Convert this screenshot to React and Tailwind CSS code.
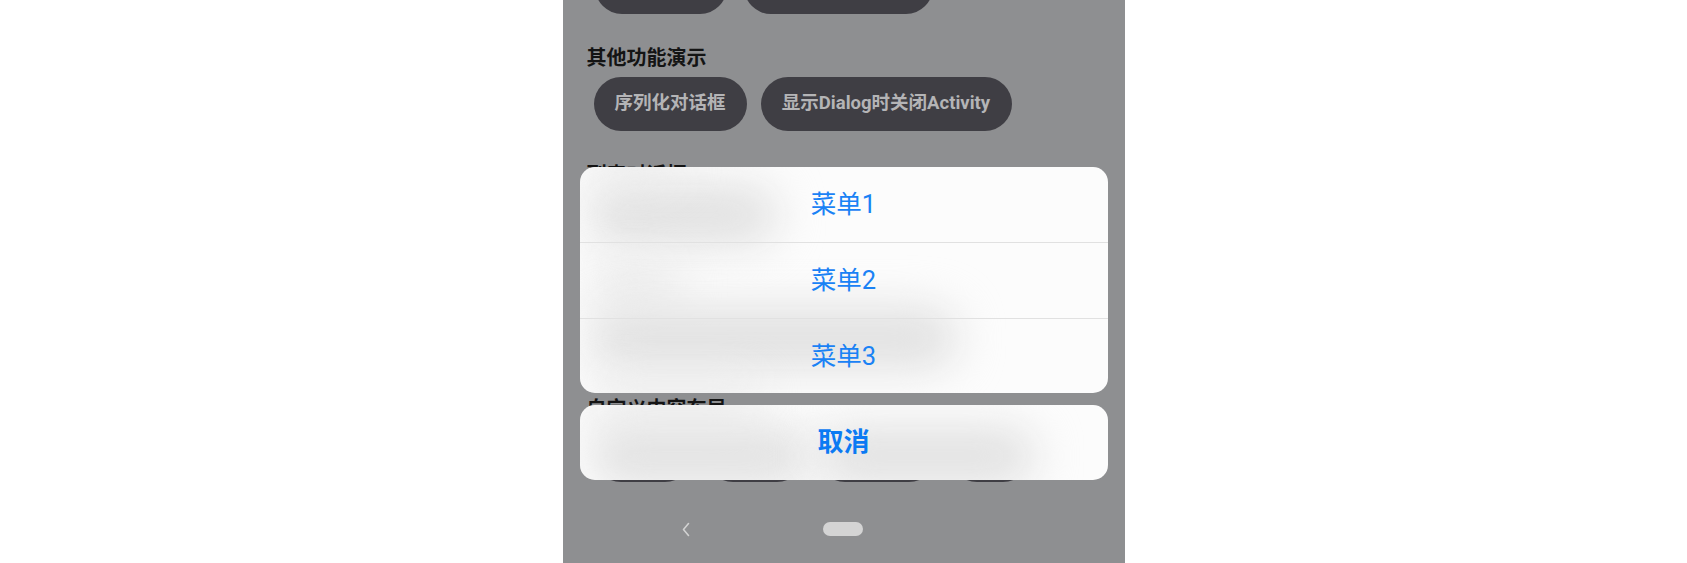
import React from "react";

const FONT = { fontFamily: "Roboto, 'Noto Sans CJK SC', 'Noto Sans', sans-serif" };

function Pill({ children, className = "" }) {
  return (
    <div
      className={`h-[54px] shrink-0 rounded-full bg-[#3f3e44] flex items-center justify-center text-[18.5px] font-bold text-[#b4b4b6] whitespace-nowrap ${className}`}
    >
      {children}
    </div>
  );
}

function Heading({ children, className = "" }) {
  return (
    <div className={`h-[26px] leading-[26px] text-[20px] font-semibold text-[#141414] whitespace-nowrap ${className}`}>
      {children}
    </div>
  );
}

/* soft blurred shapes: what shows through the frosted-glass sheet */
function Smudge({ l, t, w, h, c = "#e1e1e1" }) {
  return (
    <div
      className="absolute rounded-full blur-[22px]"
      style={{ left: l, top: t, width: w, height: h, backgroundColor: c }}
    />
  );
}

const card = "relative rounded-[15px] overflow-hidden bg-[#fcfcfc]";

export default function App() {
  return (
    <div className="w-full h-[563px] bg-white flex justify-center" style={FONT}>
      <div className="relative w-[562px] h-[563px] bg-[#8e8f91] overflow-hidden">
        {/* page content */}
        <div className="flex flex-col pl-[24px]">
          <div className="flex gap-[17px] mt-[-40px] ml-[8px]">
            <Pill className="w-[132px]">文本输入</Pill>
            <Pill className="w-[189px]">自定义对话框</Pill>
          </div>

          <Heading className="mt-[31px]">其他功能演示</Heading>
          <div className="flex gap-[14px] mt-[6px] ml-[7px]">
            <Pill className="w-[153px]">序列化对话框</Pill>
            <Pill className="w-[251px]">显示Dialog时关闭Activity</Pill>
          </div>

          <Heading className="mt-[31px]">列表对话框</Heading>
          <div className="flex gap-[14px] mt-[6px] ml-[7px]">
            <Pill className="w-[116px]">底部菜单</Pill>
            <Pill className="w-[79px]">列表</Pill>
          </div>

          <Heading className="mt-[31px]">提示框</Heading>
          <div className="flex gap-[14px] mt-[6px] ml-[7px]">
            <Pill className="w-[135px]">普通提示框</Pill>
            <Pill className="w-[79px]">通知</Pill>
            <Pill className="w-[116px]">弹出提示</Pill>
          </div>

          <Heading className="mt-[31px]">自定义内容布局</Heading>
          <div className="flex gap-[14px] mt-[6px] ml-[7px]">
            <Pill className="w-[98px]">对话框</Pill>
            <Pill className="w-[98px]">消息框</Pill>
            <Pill className="w-[118px]">自定义框</Pill>
            <Pill className="w-[80px]">弹窗</Pill>
          </div>
        </div>

        {/* navigation bar */}
        <div className="absolute left-0 right-0 top-[515px] h-[28px]">
          <svg
            className="absolute left-[118px] top-[7px]"
            width="10"
            height="15"
            viewBox="0 0 10 15"
            fill="none"
          >
            <path d="M7.5 1.5 L2.5 7.5 L7.5 13.5" stroke="#d2d2d2" strokeWidth="1.6" strokeLinecap="round" strokeLinejoin="round" />
          </svg>
          <div className="absolute left-[260px] top-[7px] w-[40px] h-[14px] rounded-full bg-[#d4d4d4]" />
        </div>

        {/* bottom menu overlay */}
        <div className="absolute top-[167px] left-[17px] right-[17px] flex flex-col gap-[12px]">
          <div className={`${card} flex flex-col`}>
            <Smudge l={8} t={18} w={190} h={60} />
            <Smudge l={10} t={-10} w={90} h={24} c="#e8e8e8" />
            <Smudge l={10} t={100} w={90} h={34} c="#e8e8e8" />
            <Smudge l={8} t={140} w={370} h={62} />
            <Smudge l={10} t={215} w={170} h={24} c="#e8e8e8" />
            <div className="relative h-[75px] flex items-center justify-center text-[25.5px] text-[#1a82f5]">菜单1</div>
            <div className="relative h-px bg-[#e1e1e1]" />
            <div className="relative h-[75px] flex items-center justify-center text-[25.5px] text-[#1a82f5]">菜单2</div>
            <div className="relative h-px bg-[#e1e1e1]" />
            <div className="relative h-[74px] flex items-center justify-center text-[25.5px] text-[#1a82f5]">菜单3</div>
          </div>
          <div className={`${card} h-[75px] flex items-center justify-center`}>
            <Smudge l={10} t={-8} w={170} h={24} c="#e8e8e8" />
            <Smudge l={10} t={22} w={220} h={58} />
            <Smudge l={236} t={22} w={220} h={58} />
            <span className="relative text-[26px] font-bold text-[#0b7af3]">取消</span>
          </div>
        </div>
      </div>
    </div>
  );
}
